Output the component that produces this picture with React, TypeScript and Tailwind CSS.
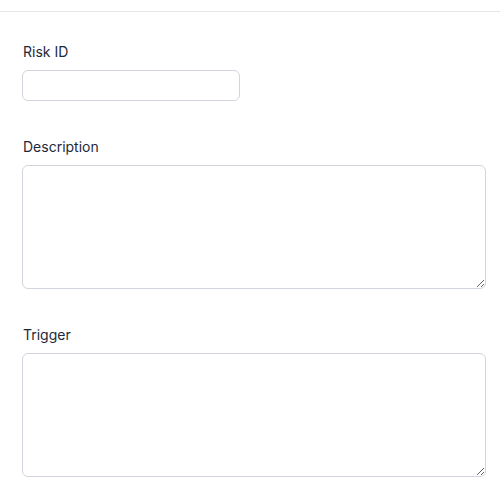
import React from 'react';

const Field: React.FC<{ label: string; children: React.ReactNode }> = ({ label, children }) => (
  <div className="flex flex-col">
    <label className="text-sm leading-5 font-normal text-gray-800 mb-[8px] ml-[1px]">{label}</label>
    {children}
  </div>
);

export default function App() {
  return (
    <div className="min-h-[484px] bg-white" style={{ fontFamily: 'Inter, "Noto Sans", sans-serif' }}>
      <div className="h-[12px] border-b border-gray-200" />
      <form className="pl-[22px] pr-[14px] pt-[30px] flex flex-col gap-[36px]">
        <Field label="Risk ID">
          <input
            type="text"
            className="w-[218px] h-[31px] rounded-md border border-gray-300 bg-white px-3 text-sm outline-none"
          />
        </Field>
        <Field label="Description">
          <textarea className="w-[464px] h-[124px] rounded-md border border-gray-300 bg-white px-3 py-2 text-sm outline-none" />
        </Field>
        <Field label="Trigger">
          <textarea className="w-[464px] h-[124px] rounded-md border border-gray-300 bg-white px-3 py-2 text-sm outline-none" />
        </Field>
      </form>
    </div>
  );
}
